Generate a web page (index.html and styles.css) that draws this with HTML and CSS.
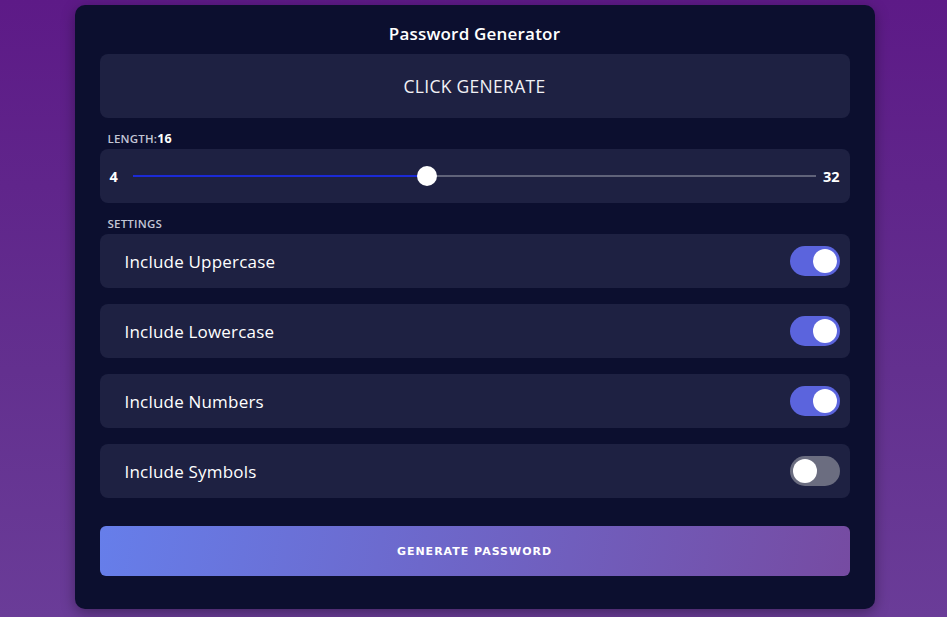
FILE: index.html
```html
<!DOCTYPE html>
<html>
<head>
<meta charset="utf-8">
<link rel="stylesheet" href="styles.css">
</head>
<body>
<div class="card">
  <h1 class="title">Password Generator</h1>
  <div class="output">CLICK GENERATE</div>
  <div class="label">LENGTH:<b>16</b></div>
  <div class="panel slider-panel">
    <span class="num min">4</span>
    <div class="track">
      <div class="fill" style="width:43%"></div>
      <div class="thumb" style="left:43%"></div>
    </div>
    <span class="num max">32</span>
  </div>
  <div class="label">SETTINGS</div>
  <div class="settings">
    <div class="panel row"><span>Include Uppercase</span><span class="toggle on"></span></div>
    <div class="panel row"><span>Include Lowercase</span><span class="toggle on"></span></div>
    <div class="panel row"><span>Include Numbers</span><span class="toggle on"></span></div>
    <div class="panel row"><span>Include Symbols</span><span class="toggle"></span></div>
  </div>
  <button class="generate">GENERATE PASSWORD</button>
</div>
</body>
</html>
```
FILE: styles.css
```css
html, body { height: 100%; }
body {
  margin: 0;
  background: linear-gradient(180deg, #5d1a87 0%, #63308f 60%, #6a3c98 100%);
  font-family: "Open Sans", "DejaVu Sans", sans-serif;
  color: #fff;
}
.card {
  width: 800px;
  box-sizing: border-box;
  margin: 5px auto 0;
  background: #0c0f2f;
  border-radius: 10px;
  padding: 19px 25px 33px;
  box-shadow: 0 4px 14px rgba(0,0,0,0.35);
  transform: translateX(1px);
}
.title {
  margin: 0 0 10px;
  font-size: 17px;
  line-height: 20px;
  font-weight: 600;
  text-align: center;
  letter-spacing: 0.2px;
}
.output {
  height: 64px;
  background: #1e2142;
  border-radius: 8px;
  display: flex;
  align-items: center;
  justify-content: center;
  font-size: 17.5px;
  letter-spacing: 0.3px;
  color: #f1f1f5;
}
.label {
  margin: 14px 0 3px 8px;
  font-size: 11.5px;
  line-height: 14px;
  color: #c3c6d6;
  font-weight: 600;
  letter-spacing: 0.2px;
}
.label b { color: #fff; font-weight: 700; font-size: 12.5px; }
.panel {
  background: #1e2142;
  border-radius: 8px;
}
.slider-panel {
  height: 54px;
  display: flex;
  align-items: center;
  padding: 0 10px;
}
.num { font-size: 14.5px; font-weight: 700; }
.num.min { margin-right: 15px; }
.num.max { margin-left: 7px; }
.track {
  flex: 1;
  height: 2px;
  background: #60637a;
  position: relative;
}
.fill { height: 100%; background: #1b2ad6; }
.thumb {
  position: absolute;
  top: 50%;
  width: 20px;
  height: 20px;
  border-radius: 50%;
  background: #fff;
  transform: translate(-50%, -50%);
}
.settings { display: flex; flex-direction: column; gap: 16px; }
.row {
  height: 54px;
  display: flex;
  align-items: center;
  justify-content: space-between;
  padding: 0 10px 0 25px;
  font-size: 17px;
  letter-spacing: 0.2px;
}
.toggle {
  width: 50px;
  height: 30px;
  border-radius: 15px;
  background: #6b6d80;
  position: relative;
}
.toggle::after {
  content: "";
  position: absolute;
  top: 3px;
  left: 3px;
  width: 24px;
  height: 24px;
  border-radius: 50%;
  background: #fff;
}
.toggle.on { background: #5b64dd; }
.toggle.on::after { left: 23px; }
.generate {
  display: block;
  width: 100%;
  height: 50px;
  margin-top: 28px;
  border: 0;
  border-radius: 6px;
  background: linear-gradient(100deg, #667eea 0%, #764ba2 100%);
  color: #fff;
  font-family: "DejaVu Sans", Verdana, sans-serif;
  font-weight: 700;
  font-size: 11px;
  letter-spacing: 1px;
}
```
